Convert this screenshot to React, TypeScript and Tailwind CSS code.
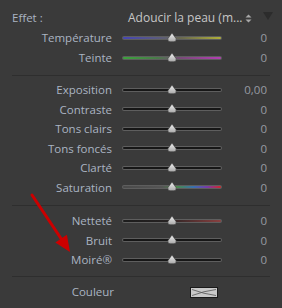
import React from "react";

type Row = { label: string; value: string; track: string };

const dark = "linear-gradient(to right, #161616, #161616)";

const group1: Row[] = [
  { label: "Température", value: "0", track: "linear-gradient(to right, #4646b4 0%, #5a5a80 35%, #6a6a50 60%, #b0b038 100%)" },
  { label: "Teinte", value: "0", track: "linear-gradient(to right, #3ca43c 0%, #4a7a4a 35%, #7a4a7a 60%, #b43cb4 100%)" },
];
const group2: Row[] = [
  { label: "Exposition", value: "0,00", track: dark },
  { label: "Contraste", value: "0", track: dark },
  { label: "Tons clairs", value: "0", track: dark },
  { label: "Tons foncés", value: "0", track: dark },
  { label: "Clarté", value: "0", track: dark },
  { label: "Saturation", value: "0", track: "linear-gradient(to right, #4a4a4a 0%, #555 40%, #4a8a4a 55%, #3a70b0 72%, #7a3aa8 86%, #d02828 100%)" },
];
const group3: Row[] = [
  { label: "Netteté", value: "0", track: "linear-gradient(to right, #1c1c1c 0%, #262222 45%, #8a4040 100%)" },
  { label: "Bruit", value: "0", track: dark },
  { label: "Moiré®", value: "0", track: dark },
];

function Thumb() {
  return (
    <svg width="10" height="9" viewBox="0 0 10 9" className="absolute left-[45px] top-[-3px]">
      <defs>
        <linearGradient id="tg" x1="0" y1="0" x2="0" y2="1">
          <stop offset="0" stopColor="#f0f0f0" />
          <stop offset="1" stopColor="#a8a8a8" />
        </linearGradient>
      </defs>
      <path d="M5 0 L9 5.5 Q10 8.5 7 8.8 L3 8.8 Q0 8.5 1 5.5 Z" fill="url(#tg)" stroke="#2a2a2a" strokeWidth="0.5" />
    </svg>
  );
}

function Slider({ row, h }: { row: Row; h: string }) {
  return (
    <div className={`flex items-center ${h}`}>
      <div className="w-[112px] text-right text-[#aab4c2] leading-none">{row.label}</div>
      <div className="ml-[10px] w-[100px] relative h-[4px] rounded-full bg-[#5e5e5e] p-[1px]">
        <div className="h-[2px] w-full rounded-full" style={{ background: row.track }} />
        <Thumb />
      </div>
      <div className="flex-1 text-right pr-[15px] text-[#979ba2] leading-none">{row.value}</div>
    </div>
  );
}

function Sep() {
  return <div className="mx-[12px] h-[1px] bg-[#2e2e2e]" />;
}

export default function App() {
  return (
    <div
      className="relative w-[282px] h-[308px] bg-[#3a3a3a] overflow-hidden text-[11.5px]"
      style={{ fontFamily: '"Open Sans", "Noto Sans", sans-serif' }}
    >
      <div className="pt-[8px] flex items-center h-[28px]">
        <div className="pl-[12px] text-[#aab4c2] w-[128px] leading-none">Effet :</div>
        <div className="text-[#c6c6c6] leading-none w-[114px] text-[12px] whitespace-nowrap">Adoucir la peau (m...</div>
        <svg width="7" height="9" viewBox="0 0 7 9" className="ml-[3px]">
          <path d="M0.5 3.5 L3.5 0.5 L6.5 3.5 Z" fill="#a8a8a8" />
          <path d="M0.5 5.5 L3.5 8.5 L6.5 5.5 Z" fill="#a8a8a8" />
        </svg>
        <svg width="12" height="10" viewBox="0 0 12 10" className="ml-[10px] mt-[-4px]">
          <path d="M1 1 L11 1 L6 9 Z" fill="#2c2c2c" />
        </svg>
      </div>
      {group1.map((r) => (
        <Slider key={r.label} row={r} h="h-[20px]" />
      ))}
      <div className="h-[7px]" />
      <Sep />
      <div className="h-[4px]" />
      {group2.map((r) => (
        <Slider key={r.label} row={r} h="h-[19.5px]" />
      ))}
      <div className="h-[8px]" />
      <Sep />
      <div className="h-[5px]" />
      {group3.map((r) => (
        <Slider key={r.label} row={r} h="h-[19.5px]" />
      ))}
      <div className="h-[6.5px]" />
      <Sep />
      <div className="h-[5px]" />
      <div className="flex items-center h-[20px]">
        <div className="w-[114px] text-right text-[#aab4c2] leading-none">Couleur</div>
        <div className="ml-[76px]">
          <svg width="28" height="11" viewBox="0 0 28 11">
            <rect x="0.5" y="0.5" width="27" height="10" fill="#c9c9c9" stroke="#1a1a1a" />
            <path d="M2 2.5 Q14 7 26 8.5 M2 8.5 Q14 4 26 2.5" stroke="#555" strokeWidth="0.8" fill="none" />
          </svg>
        </div>
      </div>
      <svg width="282" height="308" className="absolute left-0 top-0 pointer-events-none">
        <line x1="32" y1="195" x2="62" y2="240" stroke="#cc0000" strokeWidth="3" strokeLinecap="round" />
        <path d="M70 252 L66.9 234.8 L55.3 242.6 Z" fill="#cc0000" />
      </svg>
    </div>
  );
}
